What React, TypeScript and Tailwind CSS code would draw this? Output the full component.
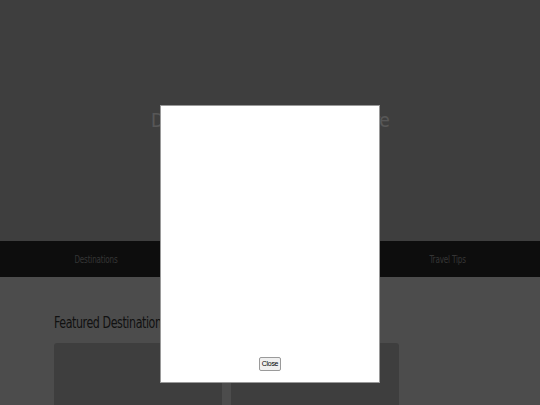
import { useState } from 'react';

const navItems = ['Destinations', 'Experiences', 'Plan Your Trip', 'Travel Tips'];

const cards = [
  { name: 'Santorini, Greece' },
  { name: 'Kyoto, Japan' },
  { name: 'Banff, Canada' },
];

export default function App() {
  const [open, setOpen] = useState(true);

  return (
    <div className="relative h-[405px] w-[540px] overflow-hidden bg-[#dedede] font-['DejaVu_Sans_Condensed','DejaVu_Sans',sans-serif]">
      {/* Hero */}
      <header className="flex h-[241px] items-center justify-center bg-[#b5b5b5]">
        <h1 className="text-[19px] leading-none tracking-[-0.6px] text-white">Discover Your Next Adventure</h1>
      </header>

      {/* Nav */}
      <nav className="grid h-[36px] grid-cols-4 items-center bg-[#262626] pl-[37px] pr-[34px]">
        {navItems.map((item) => (
          <a key={item} className="flex justify-center text-[10px] tracking-[-0.2px] text-[#9a9a9a]">
            <span className="inline-block scale-x-[0.8]">{item}</span>
          </a>
        ))}
      </nav>

      {/* Featured */}
      <main className="px-[54px] pt-[39px]">
        <h2 className="origin-left scale-x-[0.82] text-[15px] leading-none tracking-[-0.5px] whitespace-nowrap text-[#333]">
          Featured Destinations
        </h2>
        <div className="mt-[12px] flex flex-wrap gap-[9px]">
          {cards.map((c) => (
            <div key={c.name} className="h-[120px] w-[168px] rounded-[3px] bg-[#b5b5b5]" />
          ))}
        </div>
      </main>

      {/* Modal */}
      {open && (
        <div className="absolute inset-0 flex flex-col items-center bg-black/[0.66]">
          <div className="mt-[105px] flex h-[278px] w-[220px] flex-col items-center border border-[#9a9a9a] bg-white px-3 pb-[11px]">
            <button
              onClick={() => setOpen(false)}
              className="mt-auto rounded-[2px] border border-[#9a9a9a] bg-[#efefef] px-[2px] py-[1px] font-['Liberation_Sans',sans-serif] text-[7px] leading-[10px] tracking-[-0.3px] text-black"
            >
              Close
            </button>
          </div>
        </div>
      )}
    </div>
  );
}
